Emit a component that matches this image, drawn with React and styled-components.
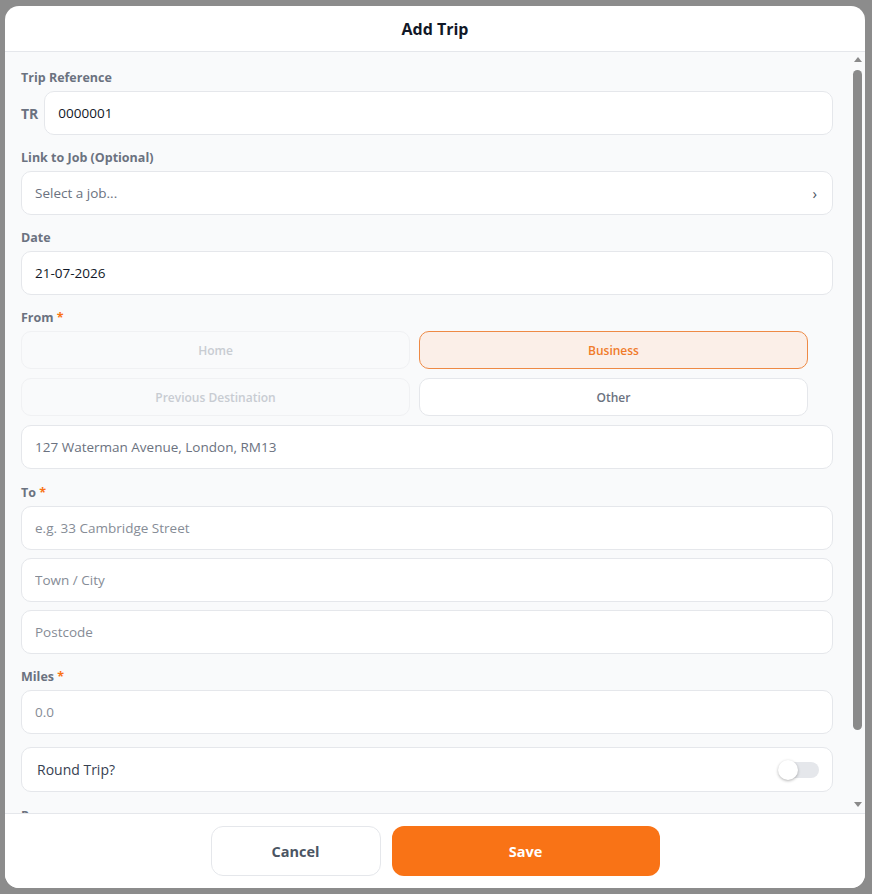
import React from "react";
import styled, { createGlobalStyle } from "styled-components";

const GlobalStyle = createGlobalStyle`
  html, body {
    margin: 0;
    padding: 0;
    height: 100%;
  }
  body {
    background: #8c8c8c;
    font-family: "Open Sans", "Liberation Sans", sans-serif;
    color: #111827;
  }
  #root {
    height: 100%;
  }
  * {
    box-sizing: border-box;
  }
`;

const fromOptions = [
  { label: "Home", state: "disabled" },
  { label: "Business", state: "active" },
  { label: "Previous Destination", state: "disabled" },
  { label: "Other", state: "idle" },
];

const App = () => {
  return (
    <>
      <GlobalStyle />
      <Overlay>
        <Modal>
          <Header>Add Trip</Header>

          <Body>
            <Content>
              <Field>
                <Label>Trip Reference</Label>
                <RefRow>
                  <Prefix>TR</Prefix>
                  <Input defaultValue="0000001" />
                </RefRow>
              </Field>

              <Field>
                <Label>Link to Job (Optional)</Label>
                <SelectBox>
                  <span>Select a job...</span>
                  <Chevron>›</Chevron>
                </SelectBox>
              </Field>

              <Field>
                <Label>Date</Label>
                <Input defaultValue="21-07-2026" />
              </Field>

              <Field $gap={16}>
                <Label>
                  From <Required>*</Required>
                </Label>
                <OptionGrid>
                  {fromOptions.map((opt) => (
                    <OptionButton key={opt.label} $state={opt.state}>
                      {opt.label}
                    </OptionButton>
                  ))}
                </OptionGrid>
                <Input $muted defaultValue="127 Waterman Avenue, London, RM13" />
              </Field>

              <Field>
                <Label>
                  To <Required>*</Required>
                </Label>
                <Stack>
                  <Input placeholder="e.g. 33 Cambridge Street" />
                  <Input placeholder="Town / City" />
                  <Input placeholder="Postcode" />
                </Stack>
              </Field>

              <Field $gap={13}>
                <Label>
                  Miles <Required>*</Required>
                </Label>
                <Input placeholder="0.0" />
              </Field>

              <ToggleCard>
                <span>Round Trip?</span>
                <Switch>
                  <Knob />
                </Switch>
              </ToggleCard>

              <Field>
                <Label>Purpose</Label>
                <Input placeholder="e.g. Client meeting" />
              </Field>
            </Content>

            <ScrollTrack>
              <ArrowUp />
              <Thumb />
              <ArrowDown />
            </ScrollTrack>
          </Body>

          <Footer>
            <CancelButton>Cancel</CancelButton>
            <SaveButton>Save</SaveButton>
          </Footer>
        </Modal>
      </Overlay>
    </>
  );
};

export default App;

const Overlay = styled.div`
  height: 100vh;
  padding: 6px 7px 6px 5px;
  display: flex;
`;

const Modal = styled.div`
  flex: 1;
  display: flex;
  flex-direction: column;
  background: #fff;
  border-radius: 14px;
  overflow: hidden;
`;

const Header = styled.div`
  height: 46px;
  flex-shrink: 0;
  display: flex;
  align-items: center;
  justify-content: center;
  border-bottom: 1px solid #e5e7eb;
  font-size: 16px;
  font-weight: 700;
  color: #111827;
`;

const Body = styled.div`
  flex: 1;
  min-height: 0;
  display: flex;
  background: #f9fafb;
`;

const Content = styled.div`
  flex: 1;
  min-width: 0;
  overflow: hidden;
  padding: 18px 17px 20px 16px;
`;

// stand-in for the native scrollbar (headless browser hides real ones)
const ScrollTrack = styled.div`
  width: 15px;
  flex-shrink: 0;
  display: flex;
  flex-direction: column;
  align-items: center;
  padding: 5px 0 6px;
`;

const ArrowUp = styled.div`
  width: 0;
  height: 0;
  border-left: 4.5px solid transparent;
  border-right: 4.5px solid transparent;
  border-bottom: 5px solid #8a8a8a;
`;

const ArrowDown = styled.div`
  margin-top: auto;
  width: 0;
  height: 0;
  border-left: 4.5px solid transparent;
  border-right: 4.5px solid transparent;
  border-top: 5px solid #8a8a8a;
`;

const Thumb = styled.div`
  width: 9px;
  height: 660px;
  margin-top: 8px;
  border-radius: 5px;
  background: #8a8a8a;
`;

const Field = styled.div`
  display: flex;
  flex-direction: column;
  margin-bottom: ${(p) => (p.$gap ? `${p.$gap}px` : "15px")};
`;

const Label = styled.div`
  font-size: 12.5px;
  line-height: 16px;
  font-weight: 700;
  color: #6b7280;
  margin-bottom: 5px;
`;

const Required = styled.span`
  color: #f97316;
`;

const RefRow = styled.div`
  display: flex;
  align-items: center;
  gap: 6px;
`;

const Prefix = styled.span`
  font-size: 14px;
  font-weight: 700;
  color: #6b7280;
`;

const Input = styled.input`
  width: 100%;
  height: 44px;
  padding: 0 13px;
  background: #fff;
  border: 1px solid #e5e7eb;
  border-radius: 10px;
  font-family: inherit;
  font-size: 13.5px;
  color: ${(p) => (p.$muted ? "#6b7280" : "#111827")};
  outline: none;

  &::placeholder {
    color: #868c96;
  }
`;

const SelectBox = styled.div`
  height: 44px;
  padding: 0 13px;
  display: flex;
  align-items: center;
  justify-content: space-between;
  background: #fff;
  border: 1px solid #e5e7eb;
  border-radius: 10px;
  font-size: 13.5px;
  color: #6b7280;
`;

const Chevron = styled.span`
  font-size: 15px;
  color: #4b5563;
  margin-right: 2px;
`;

const OptionGrid = styled.div`
  display: grid;
  grid-template-columns: 1fr 1fr;
  gap: 9px;
  padding-right: 25px;
  margin-bottom: 9px;
`;

const optionStyles = {
  disabled: "background: #f9fafb; border-color: #f0f1f3; color: #c8ccd2;",
  active: "background: #fbefe8; border-color: #ee8a45; color: #f07b2a;",
  idle: "background: #fff; border-color: #e5e7eb; color: #6b7280;",
};

const OptionButton = styled.button`
  height: 38px;
  border: 1px solid;
  border-radius: 10px;
  font-family: inherit;
  font-size: 12px;
  font-weight: 600;
  ${(p) => optionStyles[p.$state]}
`;

const Stack = styled.div`
  display: flex;
  flex-direction: column;
  gap: 8px;
`;

const ToggleCard = styled.div`
  height: 45px;
  margin-bottom: 16px;
  padding: 0 13px 0 15px;
  display: flex;
  align-items: center;
  justify-content: space-between;
  background: #fff;
  border: 1px solid #e5e7eb;
  border-radius: 10px;
  font-size: 14px;
  color: #374151;
`;

const Switch = styled.div`
  position: relative;
  width: 36px;
  height: 16px;
  border-radius: 8px;
  background: #e5e7eb;
`;

const Knob = styled.div`
  position: absolute;
  left: -5px;
  top: -2px;
  width: 20px;
  height: 20px;
  border-radius: 50%;
  background: #fff;
  box-shadow: 0 1px 3px rgba(0, 0, 0, 0.3);
`;

const Footer = styled.div`
  flex-shrink: 0;
  display: flex;
  justify-content: center;
  gap: 11px;
  padding: 12px 0;
  background: #fff;
  border-top: 1px solid #e5e7eb;
`;

const CancelButton = styled.button`
  width: 170px;
  height: 50px;
  background: #fff;
  border: 1px solid #e5e7eb;
  border-radius: 12px;
  font-family: inherit;
  font-size: 14.5px;
  font-weight: 700;
  color: #4b5563;
`;

const SaveButton = styled.button`
  width: 268px;
  height: 50px;
  background: #f97316;
  border: none;
  border-radius: 12px;
  font-family: inherit;
  font-size: 14.5px;
  font-weight: 700;
  color: #fff;
`;
